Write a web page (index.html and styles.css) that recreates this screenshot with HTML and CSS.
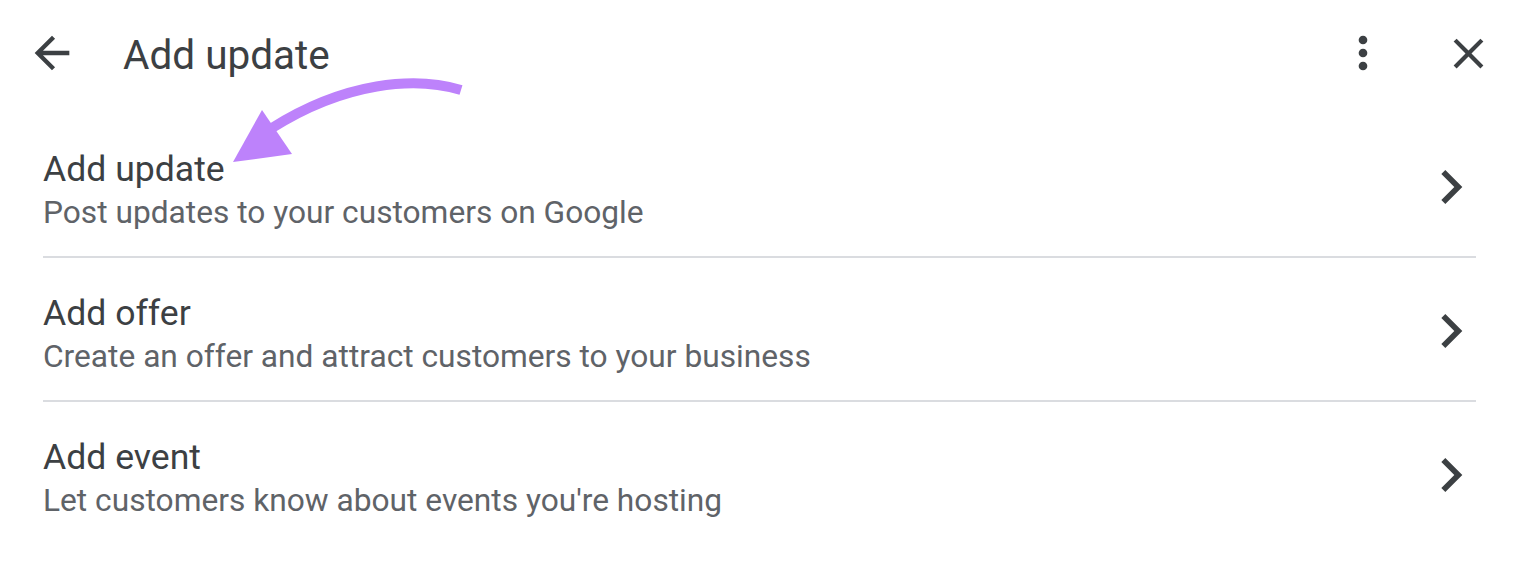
FILE: index.html
```html
<!DOCTYPE html>
<html lang="en">
<head>
<meta charset="utf-8">
<title>Add update</title>
<link rel="stylesheet" href="styles.css">
</head>
<body>
<div class="page">
  <header class="topbar">
    <svg class="icon icon-back" viewBox="0 0 24 24"><path d="M20 11H7.83l5.59-5.59L12 4l-8 8 8 8 1.41-1.41L7.83 13H20v-2z"/></svg>
    <h1 class="topbar-title">Add update</h1>
    <div class="topbar-actions">
      <svg class="icon icon-more" viewBox="0 0 24 24"><circle cx="12" cy="6" r="2"/><circle cx="12" cy="12" r="2"/><circle cx="12" cy="18" r="2"/></svg>
      <svg class="icon icon-close" viewBox="0 0 24 24"><path d="M19 6.41L17.59 5 12 10.59 6.41 5 5 6.41 10.59 12 5 17.59 6.41 19 12 13.41 17.59 19 19 17.59 13.41 12z"/></svg>
    </div>
  </header>
  <ul class="options">
    <li class="option">
      <div class="option-text">
        <div class="option-title">Add update</div>
        <div class="option-sub">Post updates to your customers on Google</div>
      </div>
      <svg class="icon icon-chevron" viewBox="0 0 24 24"><path d="M10 6L8.59 7.41 13.17 12l-4.58 4.59L10 18l6-6z"/></svg>
    </li>
    <li class="option">
      <div class="option-text">
        <div class="option-title">Add offer</div>
        <div class="option-sub">Create an offer and attract customers to your business</div>
      </div>
      <svg class="icon icon-chevron" viewBox="0 0 24 24"><path d="M10 6L8.59 7.41 13.17 12l-4.58 4.59L10 18l6-6z"/></svg>
    </li>
    <li class="option option-last">
      <div class="option-text">
        <div class="option-title">Add event</div>
        <div class="option-sub">Let customers know about events you're hosting</div>
      </div>
      <svg class="icon icon-chevron" viewBox="0 0 24 24"><path d="M10 6L8.59 7.41 13.17 12l-4.58 4.59L10 18l6-6z"/></svg>
    </li>
  </ul>
  <svg class="annotation" viewBox="0 0 1516 570" aria-hidden="true">
    <path class="annotation-shaft" d="M461 90 C 415 76, 345 82, 272 128"/>
    <polygon class="annotation-head" points="233,162 262,110 292,154"/>
  </svg>
</div>
</body>
</html>
```

FILE: styles.css
```css
html, body {
  margin: 0;
  padding: 0;
  background: #ffffff;
}

body {
  font-family: Roboto, "Liberation Sans", Arial, sans-serif;
  color: #3c4043;
}

.page {
  position: relative;
  width: 1516px;
  height: 570px;
  overflow: hidden;
}

.icon {
  display: block;
  fill: #3c4043;
  flex: none;
}

.topbar {
  display: flex;
  align-items: center;
  height: 106px;
  padding: 0 22px 0 26px;
}

.icon-back {
  width: 52px;
  height: 52px;
}

.topbar-title {
  margin: 4px 0 0 45px;
  font-size: 40.5px;
  line-height: 48px;
  font-weight: 400;
  color: #3c4043;
  flex: 1;
}

.topbar-actions {
  display: flex;
  align-items: center;
  gap: 54px;
}

.icon-more {
  width: 52px;
  height: 52px;
}

.icon-close {
  width: 51px;
  height: 51px;
}

.options {
  list-style: none;
  margin: 0 0 0 43px;
  padding: 8px 0 0 0;
  width: 1433px;
}

.option {
  display: flex;
  align-items: center;
  border-bottom: 2px solid #dadce0;
}

.option-last {
  border-bottom: none;
}

.option-text {
  flex: 1;
  padding: 33px 0 21px 0;
}

.option-title {
  font-size: 35.6px;
  line-height: 44px;
  color: #3c4043;
}

.option-sub {
  font-size: 31.7px;
  line-height: 44px;
  color: #5f6368;
}

.icon-chevron {
  width: 68px;
  height: 68px;
  margin: 4px -9px 0 0;
}

.annotation {
  position: absolute;
  left: 0;
  top: 0;
  width: 1516px;
  height: 570px;
  pointer-events: none;
}

.annotation-shaft {
  fill: none;
  stroke: #bd82fb;
  stroke-width: 10;
}

.annotation-head {
  fill: #bd82fb;
}
```
